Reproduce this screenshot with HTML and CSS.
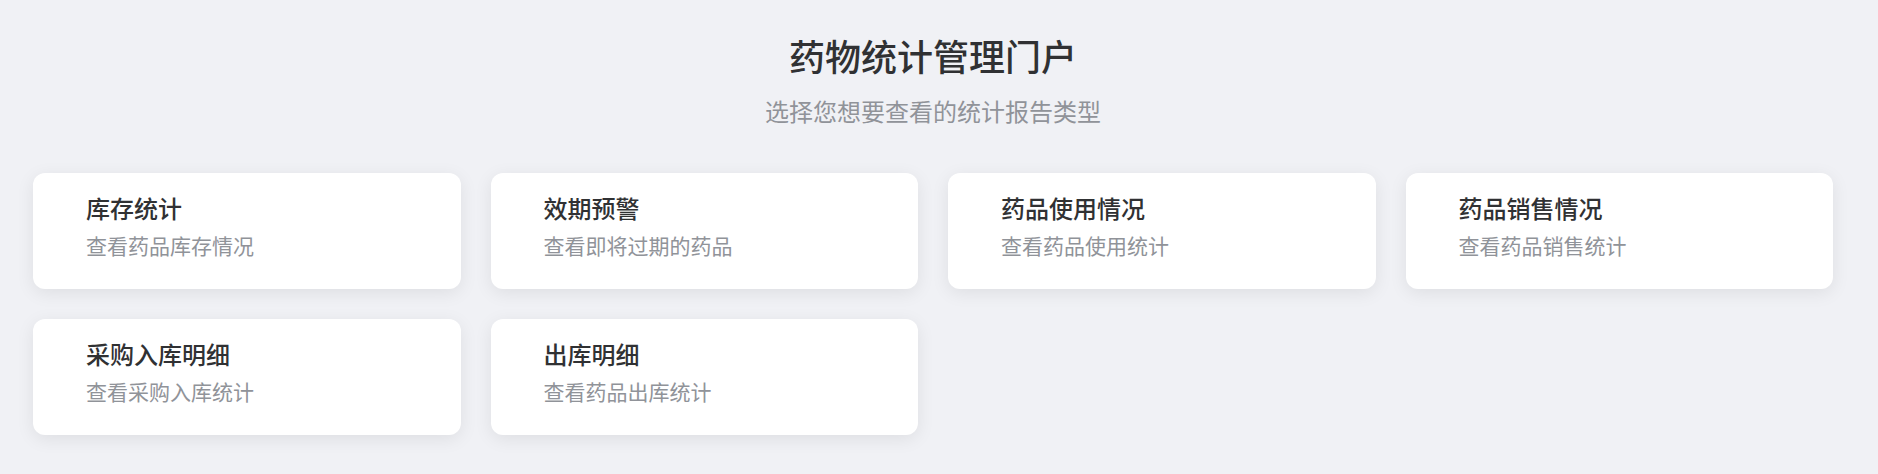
FILE: index.html
```html
<!DOCTYPE html>
<html lang="zh-CN">
<head>
<meta charset="utf-8">
<title>药物统计管理门户</title>
<link rel="stylesheet" href="styles.css">
</head>
<body>
<div class="page">
  <header class="header">
    <h1 class="title">药物统计管理门户</h1>
    <p class="subtitle">选择您想要查看的统计报告类型</p>
  </header>
  <main class="grid">
    <div class="card">
      <div class="card-title">库存统计</div>
      <div class="card-desc">查看药品库存情况</div>
    </div>
    <div class="card">
      <div class="card-title">效期预警</div>
      <div class="card-desc">查看即将过期的药品</div>
    </div>
    <div class="card">
      <div class="card-title">药品使用情况</div>
      <div class="card-desc">查看药品使用统计</div>
    </div>
    <div class="card">
      <div class="card-title">药品销售情况</div>
      <div class="card-desc">查看药品销售统计</div>
    </div>
    <div class="card">
      <div class="card-title">采购入库明细</div>
      <div class="card-desc">查看采购入库统计</div>
    </div>
    <div class="card">
      <div class="card-title">出库明细</div>
      <div class="card-desc">查看药品出库统计</div>
    </div>
  </main>
</div>
</body>
</html>
```
FILE: styles.css
```css
html, body {
  margin: 0;
  padding: 0;
  background: #f0f1f5;
}
body {
  font-family: "Noto Sans CJK SC", "Noto Sans", sans-serif;
  color: #303133;
}
.page {
  padding: 33px 45px 40px 33px;
}
.header {
  text-align: center;
}
.title {
  margin: 0;
  font-size: 36px;
  line-height: 44px;
  font-weight: 500;
  color: #303133;
}
.subtitle {
  margin: 17px 0 0;
  font-size: 24px;
  line-height: 34px;
  color: #909399;
}
.grid {
  margin-top: 45px;
  display: grid;
  grid-template-columns: repeat(4, 1fr);
  gap: 30px;
}
.card {
  background: #fff;
  border-radius: 12px;
  box-shadow: 0 4px 18px rgba(0, 0, 0, 0.08);
  padding: 19px 24px 28px 53px;
  height: 116px;
  box-sizing: border-box;
}
.card-title {
  font-size: 24px;
  line-height: 32px;
  font-weight: 500;
  color: #303133;
}
.card-desc {
  margin-top: 6px;
  font-size: 21px;
  line-height: 30px;
  color: #909399;
}
```
